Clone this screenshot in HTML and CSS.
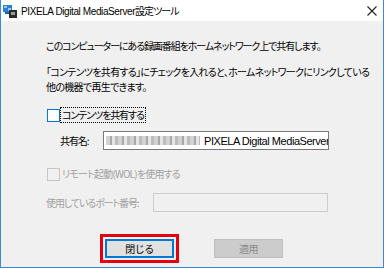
FILE: index.html
```html
<!DOCTYPE html>
<html lang="ja">
<head>
    <meta charset="UTF-8">
    <title>PIXELA Digital MediaServer設定ツール</title>
    <link rel="stylesheet" href="styles.css">
</head>
<body>
    <div id="window">
        <div class="titlebar">
            <svg class="app-icon" width="14" height="14" viewBox="0 0 14 14">
                <rect x="0" y="1" width="9" height="7" fill="#2a7fd4"/>
                <rect x="1" y="2" width="3" height="2" fill="#8fd0ff"/>
                <rect x="5" y="4" width="3" height="3" fill="#8fd0ff"/>
                <rect x="2" y="8" width="5" height="2" fill="#1f5fa8"/>
                <rect x="6" y="6" width="8" height="8" fill="#2b2b2b"/>
                <rect x="8" y="8" width="4" height="3" fill="#9a9a9a"/>
            </svg>
            <span class="title">PIXELA Digital MediaServer<span class="jp">設定ツール</span></span>
            <svg class="close-icon" width="10" height="10" viewBox="0 0 10 10">
                <path d="M0.5 0.5 L9.5 9.5 M9.5 0.5 L0.5 9.5" stroke="#222" stroke-width="1.1"/>
            </svg>
        </div>

        <div class="content">
            <p class="intro">このコンピューターにある録画番組をホームネットワーク上で共有します。</p>
            <p class="intro second">「コンテンツを共有する」にチェックを入れると、ホームネットワークにリンクしている<br>他の機器で再生できます。</p>

            <div class="check-row">
                <span class="checkbox focused"></span>
                <span class="check-label focus-ring">コンテンツを共有する</span>
            </div>

            <div class="field-row name-row">
                <span class="field-label">共有名:</span>
                <div class="textbox">
                    <span class="mosaic"></span>
                    <span class="textbox-text">PIXELA Digital MediaServer</span>
                </div>
            </div>

            <div class="check-row disabled wol-row">
                <span class="checkbox"></span>
                <span class="check-label">リモート起動(WOL)を使用する</span>
            </div>

            <div class="field-row port-row disabled">
                <span class="field-label">使用しているポート番号:</span>
                <div class="textbox port-box"></div>
            </div>

            <div class="buttons">
                <div class="highlight">
                    <button class="btn default">閉じる</button>
                </div>
                <button class="btn apply" disabled>適用</button>
            </div>
        </div>
    </div>
</body>
</html>
```

FILE: styles.css
```css
body {
    margin: 0;
    background: #ffffff;
    font-family: "Noto Sans CJK JP", "Noto Sans", sans-serif;
    font-feature-settings: "palt";
    font-size: 10px;
    letter-spacing: -1.1px;
    color: #000;
}

#window {
    width: 382px;
    height: 267px;
    border: 1px solid #3c8ad6;
    border-top: none;
    background: #f0f0f0;
    display: flex;
    flex-direction: column;
    overflow: hidden;
}

.titlebar {
    flex: none;
    height: 21px;
    background: #ffffff;
    display: flex;
    align-items: center;
}

.app-icon {
    margin: 1px 0 0 2px;
}

.title {
    margin-left: 4px;
    font-family: "Liberation Sans", sans-serif;
    font-size: 10px;
    letter-spacing: -0.4px;
    white-space: nowrap;
}

.title .jp {
    font-family: "Noto Sans CJK JP", sans-serif;
    letter-spacing: -1px;
}

.close-icon {
    margin-left: auto;
    margin-right: 6px;
}

.content {
    padding: 17px 0 0 45px;
}

.intro {
    margin: 0;
    line-height: 15px;
    white-space: nowrap;
}

.intro.second {
    margin-top: 11px;
    letter-spacing: -0.7px;
}

.check-row {
    display: flex;
    align-items: center;
    height: 16px;
    margin-top: 13px;
    margin-left: 1px;
}

.checkbox {
    width: 11px;
    height: 11px;
    border: 1px solid #333;
    background: #fff;
}

.checkbox.focused {
    border-color: #0078d7;
}

.check-label {
    margin-left: 1px;
    padding: 0 1px;
    line-height: 14px;
    white-space: nowrap;
}

.focus-ring {
    outline: 1px dotted #000;
}

.field-row {
    display: flex;
    align-items: center;
    white-space: nowrap;
}

.name-row {
    margin-top: 8px;
    margin-left: 14px;
}

.name-row .field-label {
    width: 43px;
}

.name-row .textbox {
    width: 224px;
}

.textbox {
    height: 17px;
    border: 1px solid #7a7a7a;
    background: #fff;
    display: flex;
    align-items: center;
    overflow: hidden;
    white-space: nowrap;
}

.mosaic {
    flex: none;
    width: 94px;
    height: 9px;
    margin: 0 4px 0 2px;
    background: repeating-linear-gradient(90deg, #d2d2d2 0 4px, #a9a9a9 4px 6px, #e4e4e4 6px 9px, #bcbcbc 9px 12px);
}

.textbox-text {
    font-family: "Liberation Sans", sans-serif;
    font-size: 11px;
    letter-spacing: -0.45px;
}

.disabled {
    color: #a0a0a0;
}

.disabled .checkbox {
    border-color: #c6c6c6;
    background: #f0f0f0;
}

.wol-row {
    margin-top: 16px;
}

.wol-row .check-label {
    letter-spacing: -0.8px;
}

.port-row {
    margin-top: 11px;
}

.port-row .field-label {
    width: 107px;
}

.port-box {
    width: 173px;
    border-color: #cccccc;
    background: #f0f0f0;
}

.buttons {
    display: flex;
    align-items: center;
    margin-top: 22px;
    margin-left: 54px;
}

.highlight {
    border: 3px solid #e3000f;
    padding: 2px;
}

.btn {
    width: 69px;
    height: 19px;
    font-family: inherit;
    font-size: 10px;
    letter-spacing: -0.5px;
    padding: 0;
    border: 1px solid #adadad;
    background: #e1e1e1;
    color: #000;
}

.btn.default {
    border: 2px solid #0078d7;
}

.btn.apply {
    margin-left: 35px;
    background: #cccccc;
    border-color: #bfbfbf;
    color: #8a8a8a;
}
```
